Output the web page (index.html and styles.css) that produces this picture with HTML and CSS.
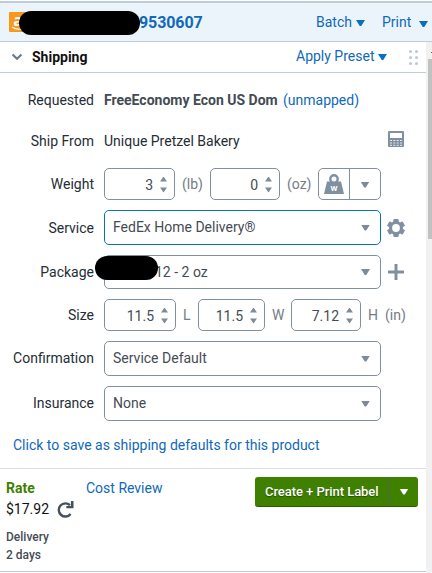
FILE: index.html
```html
<!DOCTYPE html>
<html lang="en">
<head>
<meta charset="utf-8">
<title>Shipping</title>
<link rel="stylesheet" href="styles.css">
</head>
<body>
<div class="panel">
  <header class="order-bar">
    <svg class="store" width="22" height="20" viewBox="0 0 22 20"><rect width="22" height="20" rx="1" fill="#f7981d"/><text x="4.2" y="13.5" class="store-letter">a</text><path d="M3 15q4 3 10 2" fill="none" stroke="#fff" stroke-width="1.2"/></svg>
    <span class="redact redact-order"></span>
    <span class="order-number">9530607</span>
    <a class="link batch">Batch</a><i class="caret blue"></i>
    <a class="link print">Print</a><i class="caret blue print-caret"></i>
  </header>
  <div class="body">
    <main>
      <div class="section-head">
        <svg class="chevron" width="12" height="8" viewBox="0 0 12 8"><path d="M1.5 1.5L6 5.7l4.5-4.2" fill="none" stroke="#6b7b8a" stroke-width="2.2"/></svg>
        <span class="section-title">Shipping</span>
        <a class="link preset">Apply Preset</a><i class="caret blue"></i>
        <span class="grip"><i></i><i></i><i></i><i></i><i></i><i></i></span>
      </div>
      <div class="row requested"><label>Requested</label><span class="req-name">FreeEconomy Econ US Dom</span><a class="link unmapped">(unmapped)</a></div>
      <div class="row from"><label>Ship From</label><span class="origin">Unique Pretzel Bakery</span>
        <svg class="calc" width="16" height="16" viewBox="0 0 16 16"><path fill="#8090a0" fill-rule="evenodd" d="M1 0h14q1 0 1 1v14q0 1-1 1H1q-1 0-1-1V1q0-1 1-1zM2 2v5h12V2z"/><path d="M2 9.5h12M2 12h12M2 14.3h12" stroke="#fff" stroke-width=".8" stroke-dasharray="2 1.33"/></svg>
      </div>
      <div class="row weight"><label>Weight</label>
        <span class="box num w71">3<i class="spin"></i></span><span class="unit lb">(lb)</span>
        <span class="box num w70">0<i class="spin"></i></span><span class="unit oz">(oz)</span>
        <span class="box scale">
          <span class="scale-icon"><svg width="20" height="20" viewBox="0 0 20 20"><path fill="#8090a0" d="M3 7.5h14L20 20H0z"/><circle cx="10" cy="5" r="3.7" fill="#fff" stroke="#8090a0" stroke-width="2.4"/><text x="10" y="17" text-anchor="middle" class="weight-letter">W</text></svg></span>
          <span class="scale-menu"><i class="caret"></i></span>
        </span>
      </div>
      <div class="row tall"><label>Service</label><span class="box select focus">FedEx Home Delivery®<i class="caret"></i></span>
        <svg class="side" width="18" height="18" viewBox="0 0 18 18"><g fill="#8090a0"><rect x="6.3" y="0" width="5.4" height="18" rx="1"/><rect x="6.3" y="0" width="5.4" height="18" rx="1" transform="rotate(60 9 9)"/><rect x="6.3" y="0" width="5.4" height="18" rx="1" transform="rotate(120 9 9)"/><circle cx="9" cy="9" r="7"/></g><circle cx="9" cy="9" r="3.9" fill="#fff"/></svg>
      </div>
      <div class="row package"><label>Package</label><span class="box select pack">12 - 2 oz<i class="caret"></i><span class="redact redact-pack"></span></span>
        <svg class="side plus" width="16" height="16" viewBox="0 0 16 16"><path d="M8 0v16M0 8h16" stroke="#8090a0" stroke-width="3"/></svg>
      </div>
      <div class="row size"><label>Size</label>
        <span class="box num w72">11.5<i class="spin"></i></span><span class="unit len">L</span>
        <span class="box num w67">11.5<i class="spin"></i></span><span class="unit wid">W</span>
        <span class="box num w70">7.12<i class="spin"></i></span><span class="unit hei">H</span><span class="unit inch">(in)</span>
      </div>
      <div class="row tall"><label class="raised">Confirmation</label><span class="box select">Service Default<i class="caret"></i></span></div>
      <div class="row tall"><label class="raised">Insurance</label><span class="box select">None<i class="caret"></i></span></div>
      <div class="defaults"><a class="link">Click to save as shipping defaults for this product</a></div>
      <footer>
        <div class="rates">
          <div class="rate-title">Rate</div>
          <div class="price"><span>$17.92</span><svg width="17" height="17" viewBox="0 0 17 17"><path d="M13.6 13A6.6 6.6 0 1 1 13 4.2" fill="none" stroke="#46505a" stroke-width="2.4"/><path d="M16.5 0v7.2H9.3V5h4.6V0z" fill="#46505a"/></svg></div>
          <div class="delivery">Delivery<br>2 days</div>
        </div>
        <a class="link review">Cost Review</a>
        <button class="create"><span class="create-text">Create + Print Label</span><span class="create-menu"><i class="caret white"></i></span></button>
      </footer>
    </main>
    <div class="scrollbar"><div class="up"></div><div class="thumb"></div></div>
  </div>
</div>
</body>
</html>
```
FILE: styles.css
```css
* { box-sizing: border-box; }
body { margin: 0; background: #fff; color: #252d36; font: 14px/18px Roboto, sans-serif; overflow: hidden; }
.panel { width: 432px; height: 573px; padding-top: 1px; }
.order-bar { height: 41px; display: flex; align-items: center; background: #ebf4fa; border-top: 2px solid #bfcdd6; border-bottom: 1px solid #bfcdd6; padding-left: 9px; white-space: nowrap; }
.link { color: #1069b9; white-space: nowrap; }
.redact { background: #000; border-radius: 12px; display: block; flex: none; }
.store, .chevron, .calc, .side { flex: none; display: block; }
.store-letter { font: bold 16px "Open Sans", sans-serif; fill: #fff; }
.redact-order { width: 121px; height: 24px; margin-left: -12px; margin-top: 2px; z-index: 1; }
.order-number { font-size: 16px; font-weight: 700; color: #1069b9; margin-left: -1px; margin-top: 2px; width: 64px; letter-spacing: -.1px; }
.batch { margin-left: 113px; width: 35px; }
.print { margin-left: 17px; width: 30px; }
.caret { width: 8px; height: 6px; background: #7c8b99; clip-path: polygon(0 0, 100% 0, 58% 100%, 42% 100%); flex: none; display: block; }
.select .caret, .scale .caret { margin-top: 1px; width: 9px; }
.caret.blue { background: #0870bf; width: 9px; margin-left: 5px; margin-top: 2px; }
.caret.print-caret { margin-left: 7px; margin-top: 4px; }
.caret.white { background: #fff; width: 9px; }
.body { height: 531px; display: flex; }
main { width: 426px; flex: none; }
.section-head { height: 31px; display: flex; align-items: center; border-bottom: 1px solid #bfcdd6; padding-left: 11px; }
.section-title { font-weight: 700; color: #111; margin-left: 9px; width: 60px; }
.preset { margin-left: 204px; width: 78px; margin-top: -2px; }
.section-head .caret { margin-left: 4px; margin-top: 0; }
.grip { display: grid; grid-template-columns: 3px 3px; gap: 3px; margin-left: 22px; }
.grip i { width: 3px; height: 3px; border-radius: 50%; background: #bdc7d1; }
.row { display: flex; align-items: center; margin-top: 10px; white-space: nowrap; }
.row label { width: 94px; margin-right: 10px; text-align: right; flex: none; }
.row .raised { padding-bottom: 1px; }
.requested { height: 54px; margin-top: 0; }
.req-name { font-weight: 700; color: #434b54; width: 174px; }
.unmapped { margin-left: 5px; }
.from { height: 27px; margin-top: 0; }
.origin { width: 284px; padding-top: 1px; }
.calc { margin-top: -4px; }
.weight { height: 32px; margin-top: 14px; }
.weight label { padding-bottom: 1px; }
.tall { height: 35px; }
.package { height: 34px; }
.size { height: 32px; }
.box { height: 100%; border: 1px solid #8190a0; border-radius: 5px; display: flex; align-items: center; flex: none; color: #454c54; background: #fff; }
.num { justify-content: flex-end; padding-right: 7px; padding-top: 1px; }
.w72 { width: 72px; } .w71 { width: 71px; } .w70 { width: 70px; } .w67 { width: 67px; }
.spin { width: 7px; height: 16px; margin-left: 7px; background: #7c8b99; clip-path: polygon(0 5px, 3.5px 0, 7px 5px, 0 5px, 0 11px, 7px 11px, 3.5px 16px, 0 11px); }
.unit { color: #727d88; flex: none; }
.lb { width: 35px; padding-left: 7px; }
.oz { width: 38px; padding-left: 7px; }
.len { width: 22px; padding-left: 7px; }
.wid { width: 26px; padding-left: 7px; }
.hei { width: 24px; padding-left: 7px; }
.scale { width: 63px; }
.scale-icon, .scale-menu { display: flex; align-items: center; justify-content: center; height: 100%; flex: 1; }
.scale-icon { border-right: 1px solid #8190a0; }
.weight-letter { font: bold 8px Roboto, sans-serif; fill: #fff; }
.select { width: 277px; justify-content: space-between; padding: 0 10px 1px 8px; }
.focus { border-color: #0870bf; }
.pack { padding-left: 50px; position: relative; }
.redact-pack { position: absolute; left: -10px; top: 0; width: 63px; height: 24px; }
.side { margin-left: 6px; }
.plus { margin-left: 7px; }
.defaults { height: 47px; padding: 15px 0 0 13px; }
footer { height: 104px; display: flex; align-items: flex-start; border-top: 1px solid #dadfe3; border-bottom: 1px solid #bccbd7; padding-left: 6px; }
.rates { width: 80px; padding-top: 10px; }
.rate-title { color: #3f7f00; font-weight: 700; }
.price { display: flex; align-items: center; height: 22px; margin-top: 1px; color: #111; }
.price span { width: 51px; }
.delivery { font-size: 12px; font-weight: 500; color: #454c54; margin-top: 8px; }
.review { margin-top: 10px; width: 169px; }
.create { width: 163px; height: 30px; margin-top: 8px; padding: 0; display: flex; border: 0; border-bottom: 1px solid #2c5c00; border-radius: 3px; background: #3f8000; color: #fff; font: 500 13px/30px Roboto, sans-serif; letter-spacing: -.05px; text-shadow: 0 1px 1px #244b00; white-space: nowrap; }
.create-text { width: 135px; height: 29px; padding-left: 10px; text-align: left; border-right: 1px solid #53664b; }
.create-menu { flex: 1; height: 29px; display: flex; align-items: center; justify-content: center; }
.scrollbar { width: 6px; padding-left: 2px; background: #f1f1f1; }
.up { height: 17px; display: flex; padding: 10px 0 0 3px; }
.up::before { content: ""; width: 1px; height: 1px; background: #606060; }
.thumb { height: 180px; background: #c1c1c1; }
```
